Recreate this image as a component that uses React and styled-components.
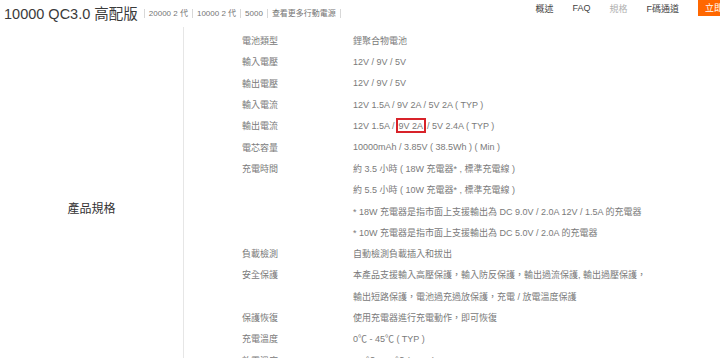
import React from 'react'
import styled, { createGlobalStyle } from 'styled-components'

const GlobalStyle = createGlobalStyle`
html, body { margin:0; padding:0; overflow:hidden; background:#fff; }
body { font-family:"Liberation Sans","Noto Sans CJK TC",sans-serif; }
`

const specs = [
  ['電池類型', '鋰聚合物電池'],
  ['輸入電壓', '12V / 9V / 5V'],
  ['輸出電壓', '12V / 9V / 5V'],
  ['輸入電流', '12V 1.5A / 9V 2A / 5V 2A ( TYP )'],
  ['輸出電流', 'mark'],
  ['電芯容量', '10000mAh / 3.85V ( 38.5Wh ) ( Min )'],
  ['充電時間', '約 3.5 小時 ( 18W 充電器* , 標準充電線 )'],
  ['', '約 5.5 小時 ( 10W 充電器* , 標準充電線 )'],
  ['', '* 18W 充電器是指市面上支援輸出為 DC 9.0V / 2.0A 12V / 1.5A 的充電器'],
  ['', '* 10W 充電器是指市面上支援輸出為 DC 5.0V / 2.0A 的充電器'],
  ['負載檢測', '自動檢測負載插入和拔出'],
  ['安全保護', '本產品支援輸入高壓保護，輸入防反保護，輸出過流保護, 輸出過壓保護，'],
  ['', '輸出短路保護，電池過充過放保護，充電 / 放電溫度保護'],
  ['保護恢復', '使用充電器進行充電動作，即可恢復'],
  ['充電溫度', '0℃ - 45℃ ( TYP )'],
  ['放電溫度', '-20℃ ~ 60℃ ( TYP )'],
]

function App() {
  return (
    <>
      <GlobalStyle />
      <Header>
        <TitleGroup>
          <Title>10000 QC3.0 高配版</Title>
          <SubLinks>
            <SubLink>20000 2 代</SubLink>
            <SubLink>10000 2 代</SubLink>
            <SubLink>5000</SubLink>
            <SubLink>查看更多行動電源</SubLink>
          </SubLinks>
        </TitleGroup>
        <Nav>
          <NavItem>概述</NavItem>
          <NavItem>FAQ</NavItem>
          <NavItem current>規格</NavItem>
          <NavItem>F碼通道</NavItem>
          <BuyButton>立即購買</BuyButton>
        </Nav>
      </Header>
      <Section>
        <SideTitle>產品規格</SideTitle>
        <Table>
          {specs.map(([label, value], i) => (
            <Row key={i}>
              <Label>{label}</Label>
              <Value>
                {value === 'mark' ? (
                  <>12V 1.5A /<Mark>9V 2A</Mark>/ 5V 2.4A ( TYP )</>
                ) : value}
              </Value>
            </Row>
          ))}
        </Table>
      </Section>
    </>
  )
}

export default App

const Header = styled.div`
height:27px;
display:flex;
justify-content:space-between;
align-items:flex-start;
`
const TitleGroup = styled.div`
display:flex;
align-items:center;
padding-left:4px;
height:24px;
`
const Title = styled.div`
font-size:14.5px;
color:#3a3a3a;
white-space:nowrap;
`
const SubLinks = styled.div`
display:flex;
align-items:center;
margin-left:6px;
padding-top:2px;
`
const SubLink = styled.span`
font-size:8px;
color:#757575;
padding:0 4px;
border-left:1px solid #d8d8d8;
line-height:9px;
white-space:nowrap;
&:last-child{
  border-right:1px solid #d8d8d8;
}
`
const Nav = styled.div`
display:flex;
align-items:center;
height:16px;
`
const NavItem = styled.span`
font-size:9px;
color:${p => (p.current ? '#b0b0b0' : '#424242')};
margin-right:19px;
white-space:nowrap;
`
const BuyButton = styled.div`
background:#ff6700;
color:#fff;
font-size:9px;
height:16px;
line-height:16px;
padding:0 7px;
margin-right:-28px;
white-space:nowrap;
`
const Section = styled.div`
display:flex;
`
const SideTitle = styled.div`
width:184px;
flex-shrink:0;
border-right:1px solid #e6e6e6;
font-size:12px;
color:#333;
text-align:center;
padding-top:172px;
box-sizing:border-box;
height:400px;
`
const Table = styled.div`
padding-top:3px;
padding-left:58px;
`
const Row = styled.div`
display:flex;
height:21.3px;
align-items:center;
font-size:9px;
color:#7a7a7a;
white-space:nowrap;
`
const Label = styled.div`
width:111px;
`
const Value = styled.div``
const Mark = styled.span`
display:inline-block;
border:2px solid #d8232a;
padding:1px 1px 0;
margin:0 1px 0 1px;
line-height:10px;
`
